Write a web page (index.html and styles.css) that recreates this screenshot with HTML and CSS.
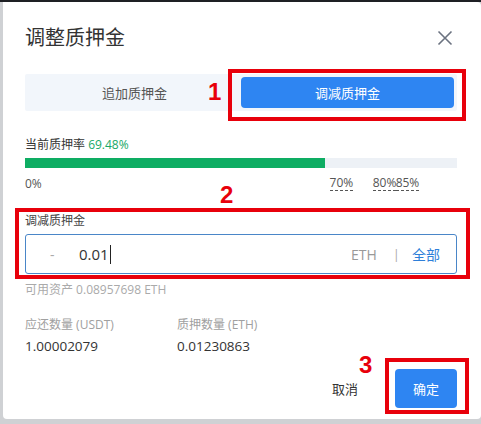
FILE: index.html
```html
<!DOCTYPE html>
<html lang="zh-CN">
<head>
  <meta charset="UTF-8" />
  <title>调整质押金</title>
  <link rel="stylesheet" href="styles.css">
</head>
<body>
  <div class="dialog">
    <div class="dialog-head">
      <h2>调整质押金</h2>
      <button class="close" type="button" aria-label="关闭">
        <svg width="16" height="16" viewBox="0 0 16 16"><path d="M1.5 1.5 L14.5 14.5 M14.5 1.5 L1.5 14.5" stroke="#6b7280" stroke-width="1.6" fill="none"/></svg>
      </button>
    </div>

    <div class="tabs">
      <button type="button" class="tab">追加质押金</button>
      <button type="button" class="tab active">调减质押金</button>
    </div>

    <div class="rate">当前质押率 <span class="green">69.48%</span></div>
    <div class="bar"><div class="bar-fill" style="width: 69.48%"></div></div>
    <div class="ticks">
      <span class="tick" style="left: 0%">0%</span>
      <span class="tick dashed" style="left: 70.5%">70%</span>
      <span class="tick dashed" style="left: 80.5%">80%</span>
      <span class="tick dashed" style="left: 85.8%">85%</span>
    </div>

    <label class="field-label">调减质押金</label>
    <div class="amount">
      <span class="minus">-</span>
      <span class="value">0.01<i class="caret"></i></span>
      <span class="unit">ETH</span>
      <span class="sep">|</span>
      <span class="all">全部</span>
    </div>
    <div class="avail">可用资产 0.08957698 ETH</div>

    <div class="stats">
      <div class="stat">
        <div class="stat-label">应还数量 (USDT)</div>
        <div class="stat-value">1.00002079</div>
      </div>
      <div class="stat">
        <div class="stat-label">质押数量 (ETH)</div>
        <div class="stat-value">0.01230863</div>
      </div>
    </div>

    <div class="footer">
      <button type="button" class="cancel">取消</button>
      <button type="button" class="ok">确定</button>
    </div>
  </div>

  <!-- annotation marks -->
  <div class="mark box1"></div>
  <div class="mark box2"></div>
  <div class="mark box3"></div>
  <span class="num n1">1</span>
  <span class="num n2">2</span>
  <span class="num n3">3</span>
</body>
</html>
```

FILE: styles.css
```css
* { box-sizing: border-box; }
html, body { margin: 0; height: 100%; }
body { background: #cfd1d4; border-top: 2px solid #1e2024; position: relative; font-family: "Open Sans", "Noto Sans CJK SC", sans-serif; color: #333; overflow: hidden; }
button { font-family: inherit; border: none; background: none; padding: 0; cursor: pointer; }

.dialog { margin-left: 3px; height: 417px; background: #fff; border-radius: 0 4px 4px 4px; padding: 22px 24px 0 22px; }
.dialog-head { display: flex; justify-content: space-between; align-items: center; height: 28px; }
.dialog-head h2 { margin: 0; font-size: 20px; font-weight: normal; color: #333; line-height: 28px; }
.close { width: 18px; height: 18px; margin-right: 3px; display: flex; align-items: center; justify-content: center; }

.tabs { margin-top: 22px; background: #f2f6fb; padding: 3px; display: grid; grid-template-columns: 1fr 1fr; height: 37px; border-radius: 2px; }
.tab { font-size: 13px; color: #555; border-radius: 4px; }
.tab.active { background: #2e85f2; color: #fff; }

.rate { margin-top: 25px; font-size: 12px; line-height: 18px; color: #333; }
.green { color: #19a866; }
.bar { margin-top: 4px; height: 10px; background: #edf1f6; }
.bar-fill { height: 100%; background: #0ead63; }
.ticks { position: relative; margin-top: 7px; height: 18px; font-size: 12px; line-height: 18px; color: #555; }
.tick { position: absolute; top: 0; }
.tick.dashed { border-bottom: 1px dashed #555; line-height: 15px; }

.field-label { display: block; margin-top: 19px; font-size: 12px; line-height: 18px; color: #444; }
.amount { margin-top: 4px; height: 40px; border: 1px solid #4a86c8; border-radius: 3px; display: flex; align-items: center; padding: 0 0 0 24px; font-size: 15px; }
.minus { color: #aaa; width: 29px; font-size: 14px; }
.value { color: #333; flex: 1; display: flex; align-items: center; }
.caret { display: inline-block; width: 1px; height: 19px; background: #222; margin-left: 1px; }
.unit { color: #999; font-size: 14px; }
.sep { color: #aaa; font-size: 13px; margin: 0 12px 0 16px; }
.all { color: #2e7fd9; font-size: 14px; margin-right: 16px; }
.avail { margin-top: 7px; font-size: 12px; line-height: 18px; color: #aaa; }

.stats { margin-top: 17px; display: flex; }
.stat { width: 152px; }
.stat-label { font-size: 12px; line-height: 18px; color: #a0a0a0; }
.stat-value { margin-top: 3px; font-size: 13.5px; line-height: 18px; color: #333; }

.footer { margin-top: 14px; display: flex; justify-content: flex-end; align-items: center; }
.cancel { font-size: 13px; color: #333; margin-right: 37px; }
.ok { width: 62px; height: 39px; background: #2e85f2; color: #fff; font-size: 13px; border-radius: 4px; }

.mark { position: absolute; border: 4px solid #e8000b; }
.box1 { left: 228px; top: 67px; width: 238px; height: 52px; }
.box2 { left: 15px; top: 206px; width: 455px; height: 71px; }
.box3 { left: 385px; top: 356px; width: 84px; height: 56px; }
.num { position: absolute; color: #e8000b; font-family: "Liberation Sans", sans-serif; font-weight: bold; font-size: 24px; line-height: 1; }
.n1 { left: 208px; top: 78px; }
.n2 { left: 220px; top: 181px; }
.n3 { left: 359px; top: 351px; }
```
